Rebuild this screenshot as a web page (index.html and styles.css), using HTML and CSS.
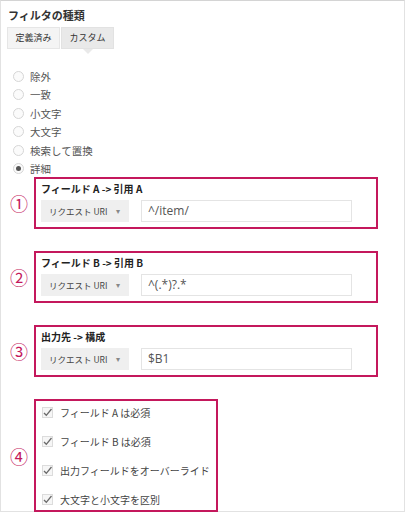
FILE: index.html
```html
<!DOCTYPE html>
<html lang="ja">
<head>
<meta charset="utf-8">
<link rel="stylesheet" href="styles.css">
</head>
<body>
<div class="frame">
  <div class="title">フィルタの種類</div>
  <div class="tabs">
    <div class="tab">定義済み</div>
    <div class="tab active">カスタム</div>
  </div>
  <ul class="radios">
    <li class="radio"><span class="dot"></span>除外</li>
    <li class="radio"><span class="dot"></span>一致</li>
    <li class="radio"><span class="dot"></span>小文字</li>
    <li class="radio"><span class="dot"></span>大文字</li>
    <li class="radio"><span class="dot"></span>検索して置換</li>
    <li class="radio"><span class="dot on"></span>詳細</li>
  </ul>
  <div class="sections">
    <div class="sec">
      <div class="num">①</div>
      <div class="box">
        <div class="btitle">フィールド A -&gt; 引用 A</div>
        <div class="fields">
          <div class="select">リクエスト URI<span class="caret">▾</span></div>
          <div class="input">^/item/</div>
        </div>
      </div>
    </div>
    <div class="sec">
      <div class="num">②</div>
      <div class="box">
        <div class="btitle">フィールド B -&gt; 引用 B</div>
        <div class="fields">
          <div class="select">リクエスト URI<span class="caret">▾</span></div>
          <div class="input">^(.*)?.*</div>
        </div>
      </div>
    </div>
    <div class="sec">
      <div class="num">③</div>
      <div class="box">
        <div class="btitle">出力先 -&gt; 構成</div>
        <div class="fields">
          <div class="select">リクエスト URI<span class="caret">▾</span></div>
          <div class="input">$B1</div>
        </div>
      </div>
    </div>
    <div class="sec">
      <div class="num">④</div>
      <div class="box checks">
        <div class="check"><svg class="cb" width="11" height="11" viewBox="0 0 11 11"><rect x="0.5" y="0.5" width="10" height="10" fill="#f6f6f6" stroke="#dcdcdc"/><path d="M2 6 L4.3 8.3 L9.5 2" fill="none" stroke="#6a6a6a" stroke-width="1.3"/></svg>フィールド A は必須</div>
        <div class="check"><svg class="cb" width="11" height="11" viewBox="0 0 11 11"><rect x="0.5" y="0.5" width="10" height="10" fill="#f6f6f6" stroke="#dcdcdc"/><path d="M2 6 L4.3 8.3 L9.5 2" fill="none" stroke="#6a6a6a" stroke-width="1.3"/></svg>フィールド B は必須</div>
        <div class="check"><svg class="cb" width="11" height="11" viewBox="0 0 11 11"><rect x="0.5" y="0.5" width="10" height="10" fill="#f6f6f6" stroke="#dcdcdc"/><path d="M2 6 L4.3 8.3 L9.5 2" fill="none" stroke="#6a6a6a" stroke-width="1.3"/></svg>出力フィールドをオーバーライド</div>
        <div class="check"><svg class="cb" width="11" height="11" viewBox="0 0 11 11"><rect x="0.5" y="0.5" width="10" height="10" fill="#f6f6f6" stroke="#dcdcdc"/><path d="M2 6 L4.3 8.3 L9.5 2" fill="none" stroke="#6a6a6a" stroke-width="1.3"/></svg>大文字と小文字を区別</div>
      </div>
    </div>
  </div>
</div>
</body>
</html>
```

FILE: styles.css
```css
* { box-sizing: border-box; }
html, body { margin: 0; padding: 0; background: #fff; }
body {
  font-family: "Noto Sans CJK JP", "Noto Sans", sans-serif;
  color: #444;
}
.frame {
  width: 405px;
  height: 512px;
  border: 1px solid #e2e2e2;
  border-top-color: #d4d4d4;
  padding-top: 7px;
}
.title {
  font-size: 11px;
  font-weight: bold;
  line-height: 14px;
  margin-left: 7px;
  color: #333;
}
.tabs {
  display: flex;
  gap: 1px;
  margin: 5px 0 0 6px;
  height: 22px;
}
.tab {
  width: 53px;
  height: 22px;
  background: #f4f4f4;
  border: 1px solid #e6e6e6;
  font-size: 9px;
  line-height: 20px;
  text-align: center;
  color: #333;
  position: relative;
}
.tab.active {
  background: #e9e9e9;
  border-color: #e2e2e2;
}
.tab.active::after {
  content: "";
  position: absolute;
  left: 21px;
  top: 21px;
  border-left: 5px solid transparent;
  border-right: 5px solid transparent;
  border-top: 5px solid #e9e9e9;
}
.radios {
  list-style: none;
  margin: 18px 0 0 0;
  padding: 0 0 0 12px;
}
.radio {
  height: 18.5px;
  display: flex;
  align-items: center;
  font-size: 10.5px;
  color: #555;
}
.dot {
  width: 11px;
  height: 11px;
  border-radius: 50%;
  border: 1px solid #d6d6d6;
  background: #fbfbfb;
  margin-right: 6px;
  display: flex;
  align-items: center;
  justify-content: center;
}
.dot.on::after {
  content: "";
  width: 5px;
  height: 5px;
  border-radius: 50%;
  background: #555;
}
.sections {
  display: flex;
  flex-direction: column;
  gap: 22px;
  margin-top: -1px;
}
.sec {
  display: flex;
  align-items: center;
}
.num {
  width: 33px;
  padding-left: 9px;
  font-size: 18px;
  color: #c4185c;
  line-height: 20px;
}
.box {
  width: 344px;
  border: 2px solid #c4185c;
  padding: 3px 6px 5px 5px;
}
.btitle {
  font-size: 10px;
  font-weight: bold;
  line-height: 14px;
  color: #222;
}
.fields {
  display: flex;
  gap: 12px;
  margin-top: 4px;
}
.select {
  width: 88px;
  height: 22px;
  background: #efefef;
  font-size: 8.5px;
  line-height: 22px;
  padding-left: 8px;
  color: #444;
  display: flex;
}
.caret {
  margin-left: 9px;
  color: #888;
  font-size: 8px;
}
.input {
  width: 211px;
  height: 22px;
  border: 1px solid #e4e4e4;
  font-family: "Open Sans", sans-serif;
  font-size: 12px;
  line-height: 20px;
  padding-left: 6px;
  color: #555;
}
.checks {
  width: 184px;
  padding: 0 0 0 6px;
  display: flex;
  flex-direction: column;
  gap: 7px;
}
.check {
  height: 22px;
  display: flex;
  align-items: center;
  font-size: 10px;
  white-space: nowrap;
  color: #444;
}
.cb {
  margin-right: 7px;
  flex: none;
}
```
